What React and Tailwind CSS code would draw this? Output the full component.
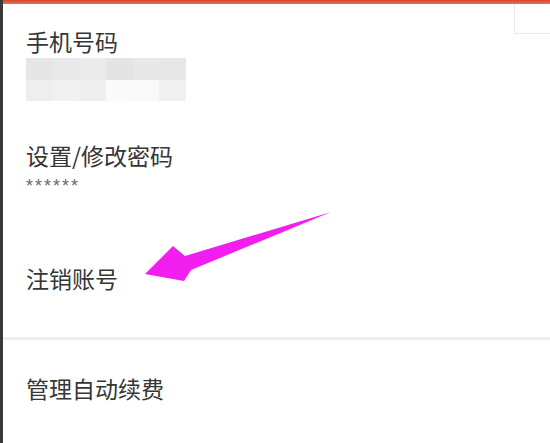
import React from 'react';

const blurCells = [
  ['#e6e6e6', '#e9e9e9', '#ebebeb', '#e4e4e4', '#e8e8e8', '#e7e7e7'],
  ['#eeeeee', '#f1f1f1', '#efefef', '#fafafa', '#f9f9f9', '#f0f0f0'],
];

const Arrow = () => (
  <svg className="absolute left-0 top-0 pointer-events-none" width="550" height="443" viewBox="0 0 550 443">
    <polygon
      points="328,212 182,256 170,246 142,274 181,281 188,270"
      fill="#f21ef0"
    />
  </svg>
);

const App = () => {
  return (
    <div
      className="relative w-[550px] h-[443px] overflow-hidden bg-white flex border-l-[3px] border-[#3a3a3a]"
      style={{ fontFamily: '"Noto Sans CJK SC", "Noto Sans", sans-serif' }}
    >
      <div className="flex-1 flex flex-col">
        {/* top accent bar */}
        <div className="h-[4px] bg-gradient-to-b from-[#d8432a] to-[#e2715f]" />

        <div className="pl-[23px] text-[#363636]">
          <div className="mt-[26px] text-[23px] leading-[23px]">手机号码</div>
          <div className="mt-[5px] w-[160px] h-[43px] grid grid-cols-6 grid-rows-2">
            {blurCells.flat().map((c, i) => (
              <div key={i} style={{ backgroundColor: c }} />
            ))}
          </div>

          <div className="mt-[43px] text-[23px] leading-[23px]">设置/修改密码</div>
          <div className="mt-[10px] text-[18px] leading-[18px] tracking-[2px] text-[#6a6a6a] font-['Liberation_Sans',sans-serif]">******</div>

          <div className="mt-[72px] text-[23px] leading-[23px]">注销账号</div>
        </div>

        <div className="mt-[47px] h-[3px] bg-[#efefef]" />

        <div className="pl-[23px] text-[#363636]">
          <div className="mt-[37px] text-[23px] leading-[23px]">管理自动续费</div>
        </div>
      </div>

      {/* faint frame corner at top right */}
      <div className="absolute right-0 top-[4px] w-[36px] h-[30px] border-l border-b border-[#e8e8e8]" />

      <Arrow />
    </div>
  );
};

export default App;
